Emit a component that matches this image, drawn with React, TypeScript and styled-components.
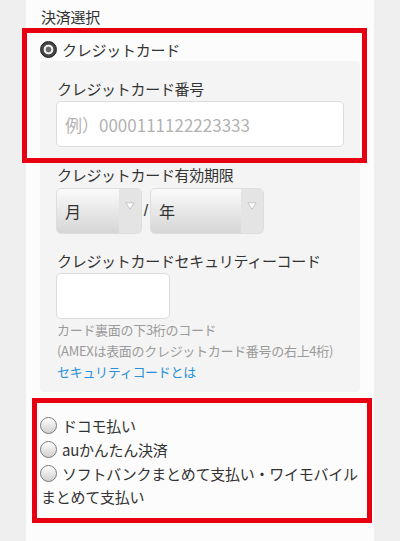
import React from "react";
import styled, { createGlobalStyle } from "styled-components";

const Global = createGlobalStyle`
  html, body { margin: 0; padding: 0; background: #efefef; }
  body { font-family: "Noto Sans CJK JP", "Noto Sans", sans-serif; color: #333; }
  * { box-sizing: border-box; }
`;

const Page = styled.div`
  position: relative;
  width: 400px;
  height: 541px;
  overflow: hidden;
  background: #efefef;
  padding-left: 26px;
`;

const Panel = styled.div`
  width: 348px;
  height: 541px;
  background: #fcfcfc;
  padding: 5px 14px 0 14px;
`;

const Heading = styled.div`
  font-size: 15px;
  line-height: 24px;
  letter-spacing: -0.25px;
  padding-left: 1px;
  color: #333;
`;

const RadioRow = styled.label<{ $first?: boolean }>`
  display: flex;
  align-items: center;
  gap: 5px;
  height: 24px;
  font-size: 15px;
  letter-spacing: -0.25px;
  color: #333;
  margin-top: ${(p) => (p.$first ? "8px" : "0")};
`;

const Radio = styled.span<{ $checked?: boolean }>`
  flex: none;
  display: block;
  width: 17px;
  height: 17px;
  border-radius: 50%;
  border: 1px solid ${(p) => (p.$checked ? "#222" : "#7a7a7a")};
  background: ${(p) =>
    p.$checked
      ? "radial-gradient(circle, #6a6a6a 0 2.5px, #ececec 3.2px 4.6px, #4a4a4a 5.2px, #2e2e2e 100%)"
      : "linear-gradient(#ffffff, #cfcfcf)"};
`;

const CardSection = styled.div`
  background: #f4f4f4;
  border-radius: 4px;
  padding: 16px 16px 10px 16px;
`;

const FieldLabel = styled.div<{ $gap?: number }>`
  font-size: 15px;
  line-height: 24px;
  letter-spacing: -0.3px;
  color: #333;
  margin-top: ${(p) => p.$gap ?? 0}px;
  padding-left: 1px;
`;

const TextInput = styled.input<{ $w: number }>`
  display: block;
  width: ${(p) => p.$w}px;
  height: 46px;
  border: 1px solid #dcdcdc;
  border-radius: 5px;
  background: #fff;
  padding: 0 8px;
  font-family: "Noto Sans CJK JP", sans-serif;
  font-size: 17px;
  color: #333;
  outline: none;
  &::placeholder { color: #b2b2b2; }
`;

const ExpiryRow = styled.div`
  display: flex;
  align-items: center;
  height: 46px;
  margin-top: 1px;
`;

const Select = styled.div<{ $w: number }>`
  display: flex;
  width: ${(p) => p.$w}px;
  height: 46px;
  border: 1px solid #dedede;
  border-radius: 5px;
  overflow: hidden;
  background: linear-gradient(#fafafa, #d6d6d6);
`;

const SelectText = styled.div`
  flex: 1;
  display: flex;
  align-items: center;
  padding-left: 8px;
  font-size: 16px;
  color: #333;
`;

const SelectArrow = styled.div`
  width: 22px;
  display: flex;
  justify-content: center;
  padding-top: 13px;
  background: #e4e4e4;
`;

const Slash = styled.span`
  width: 8px;
  text-align: center;
  font-size: 16px;
  color: #333;
  font-family: "Liberation Sans", sans-serif;
`;

const Help = styled.div`
  font-size: 13px;
  line-height: 21px;
  letter-spacing: -0.3px;
  color: #9a9a9a;
  padding-left: 1px;
`;

const Link = styled.a`
  display: block;
  font-size: 13px;
  line-height: 21px;
  letter-spacing: -0.3px;
  color: #2a90dc;
  text-decoration: none;
  padding-left: 1px;
`;

const OtherList = styled.div`
  margin-top: 21px;
`;

const WrapLine = styled.div`
  height: 24px;
  line-height: 24px;
  font-size: 15px;
  letter-spacing: -0.25px;
  color: #333;
  padding-left: 1px;
`;

const Highlight = styled.div<{ $x: number; $y: number; $w: number; $h: number }>`
  position: absolute;
  left: ${(p) => p.$x}px;
  top: ${(p) => p.$y}px;
  width: ${(p) => p.$w}px;
  height: ${(p) => p.$h}px;
  border: 5px solid #e60012;
  pointer-events: none;
`;

const Arrow = () => (
  <svg width="10" height="8" viewBox="0 0 10 8">
    <path d="M0.8 0.8 H9.2 L5 7.2 Z" fill="#fff" stroke="#c4c4c4" strokeWidth="1" />
  </svg>
);

export default function App() {
  return (
    <>
      <Global />
      <Page>
        <Panel>
          <Heading>決済選択</Heading>
          <RadioRow $first>
            <Radio $checked />
            クレジットカード
          </RadioRow>
          <CardSection>
            <FieldLabel>クレジットカード番号</FieldLabel>
            <TextInput $w={288} placeholder="例）0000111122223333" />
            <FieldLabel $gap={16}>クレジットカード有効期限</FieldLabel>
            <ExpiryRow>
              <Select $w={86}>
                <SelectText>月</SelectText>
                <SelectArrow>
                  <Arrow />
                </SelectArrow>
              </Select>
              <Slash>/</Slash>
              <Select $w={114}>
                <SelectText>年</SelectText>
                <SelectArrow>
                  <Arrow />
                </SelectArrow>
              </Select>
            </ExpiryRow>
            <FieldLabel $gap={15}>クレジットカードセキュリティーコード</FieldLabel>
            <TextInput $w={114} />
            <Help>カード裏面の下3桁のコード</Help>
            <Help>(AMEXは表面のクレジットカード番号の右上4桁)</Help>
            <Link href="#">セキュリティコードとは</Link>
          </CardSection>
          <OtherList>
            <RadioRow>
              <Radio />
              ドコモ払い
            </RadioRow>
            <RadioRow>
              <Radio />
              auかんたん決済
            </RadioRow>
            <RadioRow>
              <Radio />
              ソフトバンクまとめて支払い・ワイモバイル
            </RadioRow>
            <WrapLine>まとめて支払い</WrapLine>
          </OtherList>
        </Panel>
        <Highlight $x={22} $y={28} $w={345} $h={135} />
        <Highlight $x={32} $y={398} $w={340} $h={125} />
      </Page>
    </>
  );
}
